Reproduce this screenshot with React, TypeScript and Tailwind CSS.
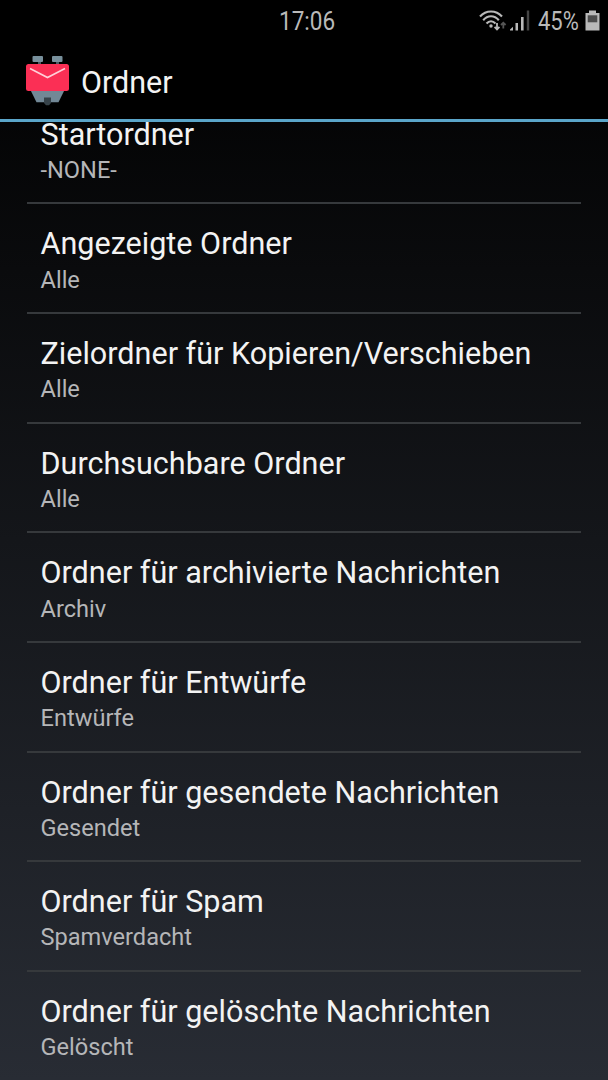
// Folder settings screen: status bar, action bar and the preference list,
// scrolled down a little so the first entry slides under the action bar.

interface Preference {
  title: string;
  summary: string;
}

const preferences: Preference[] = [
  { title: 'Startordner', summary: '-NONE-' },
  { title: 'Angezeigte Ordner', summary: 'Alle' },
  { title: 'Zielordner für Kopieren/Verschieben', summary: 'Alle' },
  { title: 'Durchsuchbare Ordner', summary: 'Alle' },
  { title: 'Ordner für archivierte Nachrichten', summary: 'Archiv' },
  { title: 'Ordner für Entwürfe', summary: 'Entwürfe' },
  { title: 'Ordner für gesendete Nachrichten', summary: 'Gesendet' },
  { title: 'Ordner für Spam', summary: 'Spamverdacht' },
  { title: 'Ordner für gelöschte Nachrichten', summary: 'Gelöscht' },
];

export default function App() {
  return (
    <div className="flex h-[1080px] w-[608px] flex-col overflow-hidden bg-linear-to-b/srgb from-black to-[#282c34] font-['Roboto',sans-serif]">
      <StatusBar />
      <header className="flex h-[81px] shrink-0 items-center border-b-3 border-[#5aa5c9] bg-black pl-[25px]">
        <AppLogo />
        <h1 className="ml-[11px] pt-[5px] text-[30.5px] leading-9 text-[#f3f3f3]">Ordner</h1>
      </header>
      <main className="min-h-0 flex-1 overflow-hidden px-[27px]">
        <ul className="-mt-[27.2px]">
          {preferences.map((pref) => (
            <PreferenceRow key={pref.title} {...pref} />
          ))}
        </ul>
      </main>
    </div>
  );
}

function PreferenceRow({ title, summary }: Preference) {
  return (
    <li className="flex h-[109.65px] flex-col border-b-2 border-[#36393c] px-[13.5px] pt-[22px]">
      <span className="whitespace-nowrap text-[30.55px] leading-9 text-[#f3f3f3]">{title}</span>
      <span className="mt-[3.2px] text-[23.6px] leading-7 text-[#b5b6b8]">{summary}</span>
    </li>
  );
}

function StatusBar() {
  return (
    <div className="grid h-[41px] shrink-0 grid-cols-[1fr_auto_1fr] items-center bg-black pt-px text-[25px] leading-none text-[#b9b9b9]">
      <span />
      <span className="ml-[5px] w-[56px] origin-left scale-x-[0.9] whitespace-nowrap">17:06</span>
      <div className="flex items-center justify-end pr-[8px]">
        <WifiIcon />
        <SignalIcon />
        <span className="ml-[7px] w-[41px] origin-left scale-x-[0.88] whitespace-nowrap">45%</span>
        <BatteryIcon />
      </div>
    </div>
  );
}

function WifiIcon() {
  return (
    <svg width="28" height="24" viewBox="0 0 28 24" fill="none">
      <g stroke="#b9b9b9" strokeWidth="2.1">
        <path d="M1 7.5C7 0.8 17 0.8 23 7.5" />
        <path d="M4.2 11.2C8.6 6 15.4 6 19.8 11.2" />
        <path d="M7.5 14.5C10.3 11.4 13.7 11.4 16.5 14.5" />
      </g>
      <circle cx="12" cy="17" r="1.7" fill="#b9b9b9" />
      <path d="M18 14V20.5M15.6 17.8L18 20.5L20.4 17.8" stroke="#b9b9b9" strokeWidth="1.8" />
      <path d="M24.3 19.5V13.5M22 16L24.3 13.7L26.6 16" stroke="#555" strokeWidth="1.8" />
    </svg>
  );
}

function SignalIcon() {
  return (
    <svg className="ml-[3px]" width="21" height="22" viewBox="0 0 21 22">
      <path d="M-1 20.5L3 16.8V20.5Z" fill="#b9b9b9" />
      <path d="M5.5 13H8V20.5H5.5Z" fill="#b9b9b9" />
      <path d="M11 7H13.6V20.5H11Z" fill="#b9b9b9" />
      <path d="M16.8 0.5H19.2V20.5H16.8Z" fill="#454545" />
    </svg>
  );
}

function BatteryIcon() {
  return (
    <svg className="ml-[6px]" width="15" height="22" viewBox="0 0 15 22">
      <path d="M4 0.5H11V3H14.5V20.5H0.5V3H4Z" fill="#b9b9b9" />
      <path d="M2.7 5.3H12.3V12.3H2.7Z" fill="#4d4d4d" />
    </svg>
  );
}

function AppLogo() {
  return (
    <svg width="45" height="52" viewBox="0 0 45 52">
      <path d="M13 5H16V11H13ZM31 5H34V11H31Z" fill="#4c5c65" />
      <rect x="7.5" y="2" width="10.5" height="6" rx="1" fill="#78909c" />
      <rect x="27" y="2" width="10.5" height="6" rx="1" fill="#78909c" />
      <path d="M4.5 34H40.5L33.5 48.2H11.5Z" fill="#728896" />
      <rect x="1" y="10" width="43" height="27" rx="2.5" fill="#fb2f55" />
      <path d="M5 14.5L22.5 23.5L40 14.5" fill="none" stroke="#ffd0d9" strokeWidth="1.6" />
      <path d="M19 43.5H26V49L24 51.2H21L19 49Z" fill="#37434a" />
    </svg>
  );
}
